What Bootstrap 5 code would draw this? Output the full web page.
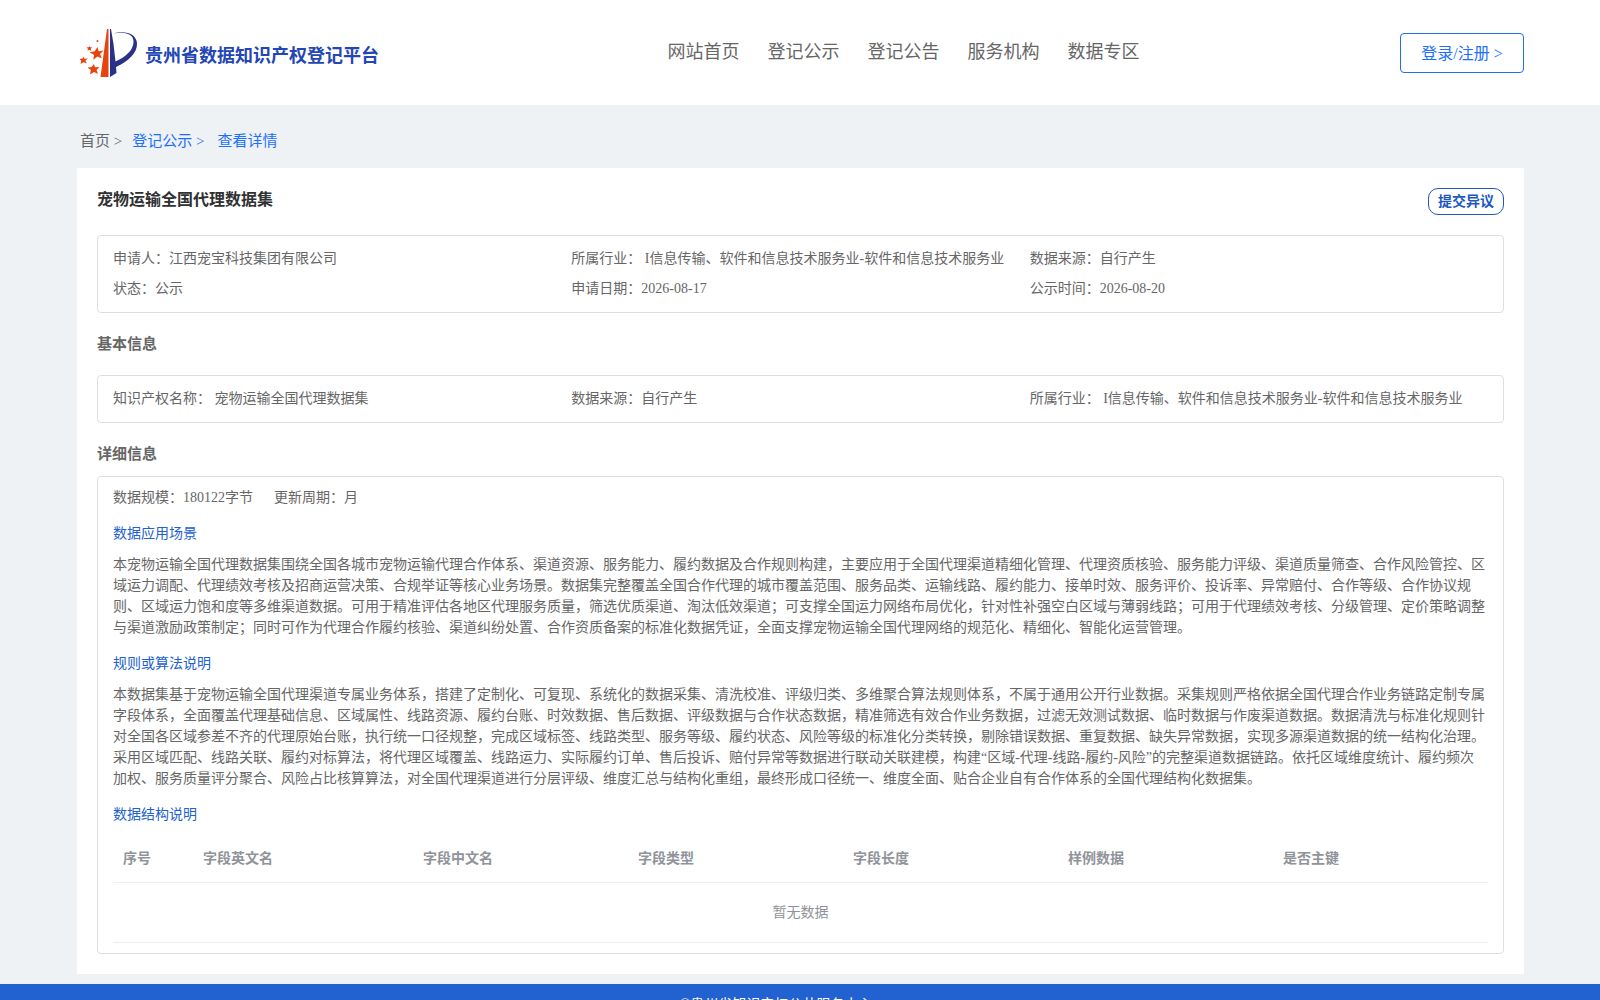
<!DOCTYPE html>
<html lang="zh-CN">
<head>
<meta charset="utf-8">
<meta name="viewport" content="width=device-width, initial-scale=1">
<title>贵州省数据知识产权登记平台</title>
<link href="https://cdn.jsdelivr.net/npm/bootstrap@5.3.0/dist/css/bootstrap.min.css" rel="stylesheet">
<style>
  body { font-family: "Liberation Serif", "Noto Sans CJK SC", serif; font-size: 14px; line-height: 21px; color: #666; background: #eef2f5; }
  a { text-decoration: none; }
  .page-wrap { padding-left: 77px; padding-right: 76px; }
  .site-header { height: 105px; }
  .brand { padding-left: 3px; gap: 7px; }
  .brand-name { padding-top: 6px; font-size: 18px; line-height: 26px; color: #2446b5; }
  .site-nav { gap: 28px; padding: 0 0 2px 28px; font-size: 18px; line-height: 26px; }
  .site-nav a { color: #666; }
  .btn-login { width: 124px; height: 40px; padding: 2px 0 0; font-size: 16px; color: #1e6fff; border: 1px solid #1e6fe8; border-radius: 4px; }
  .crumbs { height: 63px; padding: 10px 3px 0; font-size: 15px; }
  .crumbs a { color: #1e6fff; }
  .crumbs .crumb-home { color: #666; margin-right: 10px; }
  .crumbs .crumb-here { margin-left: 13px; }
  .panel { padding: 20px; }
  .panel-title { font-size: 16px; line-height: 24px; color: #303133; }
  .btn-object { width: 76px; height: 27px; padding: 0; font-size: 14px; line-height: 21px; color: #2057c0; border: 1px solid #2057c0; border-radius: 10px; }
  .info-box { border: 1px solid #dcdfe0; border-radius: 4px; padding: 8px 15px; }
  .info-box .col-4 { line-height: 30px; }
  .detail-box { padding: 10px 15px; }
  .scale-row { gap: 21px; }
  .section-title { font-size: 15px; line-height: 22px; }
  .detail-title { padding-top: 20px; margin-bottom: 11px; }
  .sub-title { font-size: 14px; font-weight: 400; line-height: 21px; color: #2161d0; margin: 15px 0 10px; }
  .field-table { table-layout: fixed; margin: 10px 0 0; --bs-table-color: #909399; --bs-table-bg: transparent; border-color: #ebeef5; }
  .field-table th, .field-table td { color: #909399; line-height: 23px; }
  .field-table th { padding: 12px 10px; }
  .field-table td { padding: 18px 10px; }
  .site-footer { background: #2161d0; margin-top: 10px; padding: 10px 48px 10px 0; }
</style>
</head>
<body>
<header class="site-header bg-white page-wrap d-flex align-items-center justify-content-between">
  <a href="#" class="brand d-flex align-items-center">
    <svg width="58" height="52" viewBox="0 0 58 52" aria-hidden="true">
      <path fill="#e6430f" d="M27 2h1.500v48h-8z"/>
      <path fill="#2a3188" d="M30 2h1l2.500 15 2 17.500c11-5 18.500-12 18-20.500C53 7 45 4.500 33 6.500 46 3 56 7 57 16c.5 10-8.500 18-21 24l.5 6-6.500 4z"/>
      <g fill="#e6430f">
        <path d="M17.500 20l1.200 4.300 4.800-.8-3.500 3.600 2 4.400-4.500-2-4.200 3.300.7-5-4.500-2.500 5.200-1z"/>
        <path d="M14 37l1 3.300 4.500-.3-3 3 1.500 4-4-2-4 2.500.8-4.500-3.300-2.500 4.200-.5z"/>
        <path d="M3.500 29.500l.8 2.300 3.200-.3-2 2.300 1 2.700-3-1.200-3 1.700.8-3.200-2-2 3 0z"/>
        <path d="M9.500 19l.6 1.300 2-.1-1.300 1.500.5 2-1.900-.9-1.900 1 .5-2-1.500-1.400 2.200-.1z"/>
        <circle cx="17.500" cy="14" r="1"/>
      </g>
    </svg>
    <span class="brand-name fw-bold">贵州省数据知识产权登记平台</span>
  </a>
  <nav class="site-nav d-flex">
    <a href="#">网站首页</a><a href="#">登记公示</a><a href="#">登记公告</a><a href="#">服务机构</a><a href="#">数据专区</a>
  </nav>
  <button type="button" class="btn btn-login">登录/注册 &gt;</button>
</header>

<main class="page-wrap">
  <nav class="crumbs d-flex align-items-center">
    <a href="#" class="crumb-home">首页 &gt;</a><a href="#">登记公示 &gt;</a><a href="#" class="crumb-here">查看详情</a>
  </nav>
  <div class="panel bg-white">
    <div class="d-flex justify-content-between align-items-start mb-3 pb-1">
      <h1 class="panel-title fw-bold mb-0">宠物运输全国代理数据集</h1>
      <button type="button" class="btn btn-object fw-bold">提交异议</button>
    </div>
    <div class="info-box">
      <div class="row g-0">
        <div class="col-4">申请人：江西宠宝科技集团有限公司</div>
        <div class="col-4">所属行业： I信息传输、软件和信息技术服务业-软件和信息技术服务业</div>
        <div class="col-4">数据来源：自行产生</div>
        <div class="col-4">状态：公示</div>
        <div class="col-4">申请日期：2026-08-17</div>
        <div class="col-4">公示时间：2026-08-20</div>
      </div>
    </div>
    <h2 class="section-title fw-bold py-3 mt-1 mb-1">基本信息</h2>
    <div class="info-box">
      <div class="row g-0">
        <div class="col-4">知识产权名称： 宠物运输全国代理数据集</div>
        <div class="col-4">数据来源：自行产生</div>
        <div class="col-4">所属行业： I信息传输、软件和信息技术服务业-软件和信息技术服务业</div>
      </div>
    </div>
    <h2 class="section-title detail-title fw-bold">详细信息</h2>
    <div class="info-box detail-box">
      <div class="scale-row d-flex"><span>数据规模：180122字节</span><span>更新周期：月</span></div>
      <h3 class="sub-title">数据应用场景</h3>
      <p class="mb-0">本宠物运输全国代理数据集围绕全国各城市宠物运输代理合作体系、渠道资源、服务能力、履约数据及合作规则构建，主要应用于全国代理渠道精细化管理、代理资质核验、服务能力评级、渠道质量筛查、合作风险管控、区域运力调配、代理绩效考核及招商运营决策、合规举证等核心业务场景。数据集完整覆盖全国合作代理的城市覆盖范围、服务品类、运输线路、履约能力、接单时效、服务评价、投诉率、异常赔付、合作等级、合作协议规则、区域运力饱和度等多维渠道数据。可用于精准评估各地区代理服务质量，筛选优质渠道、淘汰低效渠道；可支撑全国运力网络布局优化，针对性补强空白区域与薄弱线路；可用于代理绩效考核、分级管理、定价策略调整与渠道激励政策制定；同时可作为代理合作履约核验、渠道纠纷处置、合作资质备案的标准化数据凭证，全面支撑宠物运输全国代理网络的规范化、精细化、智能化运营管理。</p>
      <h3 class="sub-title">规则或算法说明</h3>
      <p class="mb-0">本数据集基于宠物运输全国代理渠道专属业务体系，搭建了定制化、可复现、系统化的数据采集、清洗校准、评级归类、多维聚合算法规则体系，不属于通用公开行业数据。采集规则严格依据全国代理合作业务链路定制专属字段体系，全面覆盖代理基础信息、区域属性、线路资源、履约台账、时效数据、售后数据、评级数据与合作状态数据，精准筛选有效合作业务数据，过滤无效测试数据、临时数据与作废渠道数据。数据清洗与标准化规则针对全国各区域参差不齐的代理原始台账，执行统一口径规整，完成区域标签、线路类型、服务等级、履约状态、风险等级的标准化分类转换，剔除错误数据、重复数据、缺失异常数据，实现多源渠道数据的统一结构化治理。采用区域匹配、线路关联、履约对标算法，将代理区域覆盖、线路运力、实际履约订单、售后投诉、赔付异常等数据进行联动关联建模，构建“区域-代理-线路-履约-风险”的完整渠道数据链路。依托区域维度统计、履约频次加权、服务质量评分聚合、风险占比核算算法，对全国代理渠道进行分层评级、维度汇总与结构化重组，最终形成口径统一、维度全面、贴合企业自有合作体系的全国代理结构化数据集。</p>
      <h3 class="sub-title">数据结构说明</h3>
      <table class="table field-table">
        <colgroup><col style="width:80px"><col style="width:220px"><col><col><col><col><col></colgroup>
        <thead><tr><th>序号</th><th>字段英文名</th><th>字段中文名</th><th>字段类型</th><th>字段长度</th><th>样例数据</th><th>是否主键</th></tr></thead>
        <tbody><tr><td colspan="7" class="text-center">暂无数据</td></tr></tbody>
      </table>
    </div>
  </div>
</main>
<footer class="site-footer text-white text-center">©贵州省知识产权公共服务中心</footer>
<script src="https://cdn.jsdelivr.net/npm/bootstrap@5.3.0/dist/js/bootstrap.bundle.min.js"></script>
</body>
</html>
